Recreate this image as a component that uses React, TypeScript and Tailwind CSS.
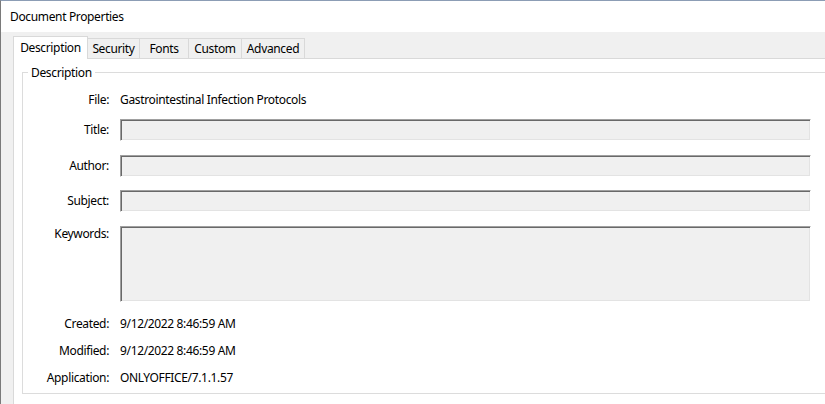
import React from "react";

const font = { fontFamily: '"Noto Sans", "Liberation Sans", sans-serif' };

function Field({ h }: { h: string }) {
  return (
    <div
      className={`w-[691px] ${h} bg-[#f0f0f0] border border-t-[#a0a0a0] border-l-[#a0a0a0] border-b-white border-r-white shadow-[inset_1px_1px_0_#696969,inset_-1px_-1px_0_#e3e3e3]`}
    />
  );
}

function Row({
  label,
  children,
  className = "",
  top = false,
}: {
  label: string;
  children: React.ReactNode;
  className?: string;
  top?: boolean;
}) {
  return (
    <div className={`flex ${top ? "items-start" : "items-center"} ${className}`}>
      <div className="w-[86px] text-right leading-[16px] shrink-0">{label}</div>
      <div className="ml-[11px] leading-[16px]">{children}</div>
    </div>
  );
}

export default function App() {
  return (
    <div
      className="w-[825px] h-[404px] overflow-hidden flex flex-col border-t border-t-[#8c9db5] border-l border-l-[#7a7a7a] text-[12px] tracking-[-0.35px] text-black bg-[#f0f0f0]"
      style={font}
    >
      <div className="h-[31px] bg-white flex items-center pl-[9px] pt-[1px] shrink-0">
        Document Properties
      </div>
      <div className="flex-1 flex flex-col pt-[4px] pl-[12px] min-h-0">
        <div className="flex items-end h-[22px] shrink-0">
          <div className="relative z-10 h-[23px] -mb-[1px] w-[75px] bg-white border-l border-t border-r border-[#d9d9d9] flex items-start justify-center pt-[2px]">
            Description
          </div>
          <div className="h-[20px] w-[52px] border-t border-r border-[#d9d9d9] flex items-center justify-center">
            Security
          </div>
          <div className="h-[20px] w-[49px] border-t border-r border-[#d9d9d9] flex items-center justify-center">
            Fonts
          </div>
          <div className="h-[20px] w-[53px] border-t border-r border-[#d9d9d9] flex items-center justify-center">
            Custom
          </div>
          <div className="h-[20px] w-[63px] border-t border-r border-[#d9d9d9] flex items-center justify-center">
            Advanced
          </div>
        </div>
        <div className="flex-1 bg-white border-l border-t border-[#d9d9d9] pl-[8px] pt-[5px] w-[900px]">
          <fieldset className="w-[820px] border border-[#dcdcdc] pb-[7px]">
            <legend className="ml-[5px] px-[3px] leading-[16px] relative top-[1px]">Description</legend>
            <Row label="File:" className="mt-[11px] h-[17px] pt-[1px]">
              Gastrointestinal Infection Protocols
            </Row>
            <Row label="Title:" className="mt-[11px]">
              <Field h="h-[22px]" />
            </Row>
            <Row label="Author:" className="mt-[14px]">
              <Field h="h-[22px]" />
            </Row>
            <Row label="Subject:" className="mt-[13px]">
              <Field h="h-[22px]" />
            </Row>
            <Row label="Keywords:" className="mt-[14px]" top>
              <Field h="h-[76px]" />
            </Row>
            <Row label="Created:" className="mt-[13px] h-[17px] pt-[1px]">
              9/12/2022 8:46:59 AM
            </Row>
            <Row label="Modified:" className="mt-[10px] h-[17px] pt-[1px]">
              9/12/2022 8:46:59 AM
            </Row>
            <Row label="Application:" className="mt-[10px] h-[17px] pt-[1px]">
              ONLYOFFICE/7.1.1.57
            </Row>
          </fieldset>
        </div>
      </div>
    </div>
  );
}
